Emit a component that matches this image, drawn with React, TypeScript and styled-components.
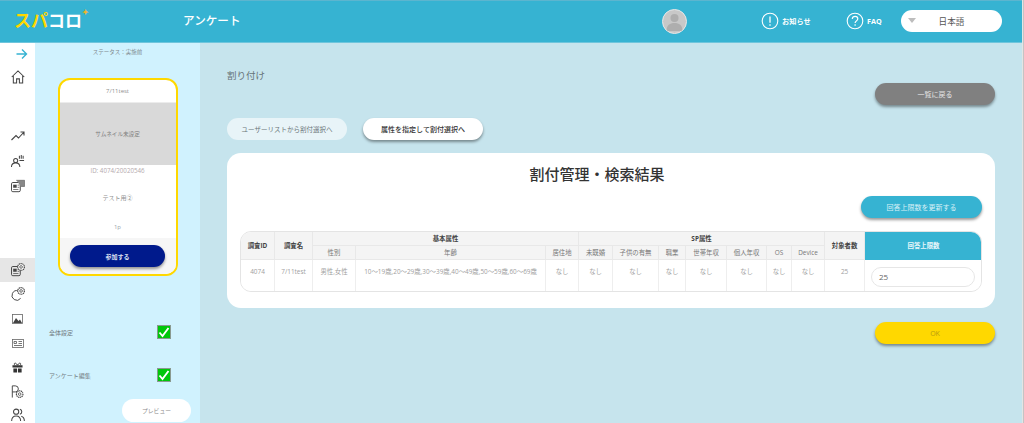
import styled, { createGlobalStyle } from "styled-components";

const GlobalStyle = createGlobalStyle`
  html, body {
    margin: 0;
    padding: 0;
    height: 423px;
    overflow: hidden;
    font-family: "Open Sans", "Noto Sans CJK JP", sans-serif;
    background: #c6e4ed;
  }
  * { box-sizing: border-box; }
`;

const Window = styled.div`
  width: 1024px;
  height: 423px;
  display: flex;
  overflow: hidden;
`;

const ScrollEdge = styled.div`
  width: 2px;
  flex: none;
  background: linear-gradient(to right, #e4e4e4 50%, #c4c4c4 50%);
`;

const Page = styled.div`
  width: 1022px;
  flex: none;
  display: flex;
  flex-direction: column;
`;

const Header = styled.header`
  height: 43px;
  flex: none;
  display: flex;
  align-items: center;
  background: #36b3d2;
  border-top: 1px solid #5cb5cf;
  border-bottom: 1px solid #6fc5dc;
  color: #fff;
  padding-left: 14px;
`;

const Logo = styled.div`
  width: 169px;
  font-size: 17px;
  font-weight: 700;
  line-height: 1;
  display: flex;
  margin-top: -2px;
  span:first-child { color: #ffd800; }
  sup {
    color: #f0b429;
    font-size: 8px;
    line-height: 1;
    margin-top: -4px;
  }
`;

const PageName = styled.div`
  font-size: 11.6px;
  font-weight: 500;
  width: 479px;
  margin-top: -3px;
`;

const Avatar = styled.div`
  width: 25px;
  height: 25px;
  flex: none;
  border-radius: 50%;
  border: 1px solid #e8e8e8;
  background: #c8c8c8;
  overflow: hidden;
  margin-right: 74px;
  margin-top: -1px;
  svg { display: block; }
`;

const HeaderLink = styled.div<{ $width: number }>`
  display: flex;
  align-items: center;
  gap: 3px;
  font-size: 7.2px;
  font-weight: 700;
  width: ${(p) => p.$width}px;
  margin-top: -1px;
`;

const LangSelect = styled.div`
  width: 101px;
  height: 22px;
  flex: none;
  margin-top: -1px;
  background: #fff;
  border-radius: 11px;
  color: #555;
  font-size: 8.6px;
  display: flex;
  align-items: center;
  justify-content: center;
  position: relative;
  &::before {
    content: "";
    position: absolute;
    left: 7px;
    top: 8px;
    border-left: 4px solid transparent;
    border-right: 4px solid transparent;
    border-top: 5px solid #bdbdbd;
  }
`;

const Body = styled.div`
  flex: 1;
  display: flex;
  min-height: 0;
`;

const IconRail = styled.nav`
  width: 35px;
  flex: none;
  background: #fff;
  display: flex;
  flex-direction: column;
  align-items: center;
`;

const RailItem = styled.div<{ $h: number; $active?: boolean; $gap?: number }>`
  width: 100%;
  height: ${(p) => p.$h}px;
  flex: none;
  margin-top: ${(p) => p.$gap ?? 0}px;
  display: flex;
  align-items: center;
  justify-content: center;
  background: ${(p) => (p.$active ? "#e6e6e6" : "transparent")};
`;

const StatusPanel = styled.aside`
  width: 165px;
  flex: none;
  background: #d0f2fe;
  display: flex;
  flex-direction: column;
  align-items: center;
  position: relative;
`;

const StatusText = styled.div`
  font-size: 5.5px;
  color: #808a8e;
  height: 35px;
  padding-top: 5px;
  line-height: 9px;
`;

const Card = styled.div`
  width: 120px;
  height: 198px;
  border: 2px solid #ffd800;
  border-radius: 12px;
  background: #fff;
  overflow: hidden;
  display: flex;
  flex-direction: column;
`;

const CardRow = styled.div<{ $h: number; $color?: string; $size?: number }>`
  height: ${(p) => p.$h}px;
  flex: none;
  display: flex;
  align-items: center;
  justify-content: center;
  font-size: ${(p) => p.$size ?? 6}px;
  color: ${(p) => p.$color ?? "#8f8f8f"};
`;

const Thumb = styled(CardRow)`
  background: #d9d9d9;
  border-top: 1px solid #ececec;
  color: #808080;
`;

const CardFooter = styled.div`
  flex: 1;
  margin-top: 4px;
  background: #f6f6f6;
  display: flex;
  justify-content: center;
  align-items: flex-start;
  padding-top: 7px;
`;

const JoinButton = styled.div`
  width: 95px;
  height: 22px;
  border-radius: 11px;
  background: #001a8c;
  color: #dfe3f3;
  font-size: 6px;
  font-weight: 700;
  display: flex;
  align-items: center;
  justify-content: center;
  box-shadow: 0 2px 3px rgba(0, 0, 0, 0.4);
`;

const CheckRow = styled.div<{ $top: number }>`
  width: 100%;
  margin-top: ${(p) => p.$top}px;
  padding-left: 14px;
  padding-right: 29px;
  height: 14px;
  display: flex;
  align-items: center;
  justify-content: space-between;
  font-size: 6px;
  color: #707a80;
`;

const CheckBox = styled.div`
  width: 14px;
  height: 14px;
  background: #00c70a;
  border: 1px solid #8a9a90;
  display: flex;
  align-items: center;
  justify-content: center;
`;

const PreviewButton = styled.div`
  position: absolute;
  left: 87px;
  top: 356px;
  width: 69px;
  height: 23px;
  border-radius: 12px;
  background: #fff;
  color: #8c8c8c;
  font-size: 5.8px;
  display: flex;
  align-items: center;
  justify-content: center;
`;

const Main = styled.main`
  flex: 1;
  background: #c6e4ed;
  padding: 0 27px;
  display: flex;
  flex-direction: column;
`;

const TitleRow = styled.div`
  height: 75px;
  padding-top: 26px;
  display: flex;
  justify-content: space-between;
  align-items: flex-start;
`;

const PageTitle = styled.h1`
  margin: 0;
  font-size: 9.5px;
  font-weight: 400;
  line-height: 14px;
  color: #667378;
`;

const Pill = styled.div<{ $bg: string; $color: string; $flat?: boolean; $w?: number; $bold?: boolean; $size?: number }>`
  width: ${(p) => p.$w ?? 120}px;
  height: 22px;
  flex: none;
  border-radius: 11px;
  background: ${(p) => p.$bg};
  color: ${(p) => p.$color};
  font-size: ${(p) => p.$size ?? 7}px;
  font-weight: ${(p) => (p.$bold ? 500 : 400)};
  display: flex;
  align-items: center;
  justify-content: center;
  box-shadow: ${(p) => (p.$flat ? "none" : "0 2px 3px rgba(0, 0, 0, 0.4)")};
`;

const BackButton = styled(Pill)`
  margin-top: 14px;
`;

const Tabs = styled.div`
  display: flex;
  gap: 16px;
  height: 35px;
`;

const ResultCard = styled.section`
  width: 768px;
  height: 155px;
  background: #fff;
  border-radius: 14px;
  padding: 0 13px;
  display: flex;
  flex-direction: column;
`;

const ResultTitle = styled.h2`
  margin: 0;
  height: 43px;
  line-height: 43px;
  padding-right: 28px;
  text-align: center;
  font-size: 15px;
  font-weight: 500;
  color: #333;
`;

const UpdateRow = styled.div`
  display: flex;
  justify-content: flex-end;
  height: 35px;
`;

const TableWrap = styled.div`
  width: 742px;
  height: 61px;
  border: 1px solid #e4e4e4;
  border-radius: 11px;
  overflow: hidden;
`;

const Table = styled.table`
  width: 742px;
  margin: -1px 0 0 -1px;
  border-collapse: collapse;
  table-layout: fixed;
  font-size: 6.4px;
`;

const Th = styled.th<{ $bold?: boolean; $accent?: boolean }>`
  padding: 0;
  height: 14px;
  background: ${(p) => (p.$accent ? "#36b3d2" : "#f4f4f4")};
  border: 1px solid #e8e8e8;
  border-color: ${(p) => (p.$accent ? "#36b3d2" : "#e8e8e8")};
  color: ${(p) => (p.$accent ? "#e8f7fb" : p.$bold ? "#444" : "#777")};
  font-weight: ${(p) => (p.$bold ? 700 : 400)};
  white-space: nowrap;
`;

const Td = styled.td`
  padding: 8px 0 0;
  height: 34px;
  vertical-align: top;
  text-align: center;
  color: #a0a0a0;
  background: #fff;
  border: 1px solid #eeeeee;
  white-space: nowrap;
  line-height: 8px;
`;

const LimitCell = styled(Td)`
  padding: 7px 7px 0 6px;
`;

const LimitInput = styled.div`
  width: 104px;
  height: 20px;
  border: 1px solid #e6e6e6;
  border-radius: 10px;
  background: #fff;
  color: #666;
  font-size: 8px;
  line-height: 18px;
  text-align: left;
  padding-left: 7px;
`;

const OkRow = styled.div`
  width: 768px;
  display: flex;
  justify-content: flex-end;
  margin-top: 14px;
`;

const ic = { fill: "none", stroke: "#444", strokeWidth: 1.1 } as const;

function CogBadge({ x, y }: { x: number; y: number }) {
  return (
    <g>
      <circle cx={x} cy={y} r={3.8} fill="#fff" stroke="#444" strokeWidth={1.3} strokeDasharray="1.5 .6" />
      <circle cx={x} cy={y} r={1.5} fill="none" stroke="#444" strokeWidth={0.9} />
    </g>
  );
}

function DocIcon({ cog }: { cog?: boolean }) {
  return (
    <svg width="14" height="14" viewBox="0 0 16 16">
      <rect x="0.6" y="4" width="10" height="10.5" rx="1.5" {...ic} />
      <rect x="2.5" y="6.5" width="4" height="3.5" fill="#444" />
      <path d="M2.5 12h6M7.5 7h2M7.5 9.500h2" {...ic} strokeWidth={0.8} />
      {cog ? <CogBadge x={11.5} y={4.5} /> : <path d="M6 1.500h9.500v7h-4" fill="#888" stroke="#666" strokeWidth={0.8} />}
    </svg>
  );
}

function CheckMark() {
  return (
    <svg width="12" height="12" viewBox="0 0 12 12">
      <path d="M1.5 6.5 4.5 10 10.5 2" fill="none" stroke="#fff" strokeWidth="1.9" />
    </svg>
  );
}

const ageText = "10〜19歳,20〜29歳,30〜39歳,40〜49歳,50〜59歳,60〜69歳";
const colWidths = [34, 38, 43, 190, 33, 34, 46, 27, 41, 40, 25, 33, 40, 118];
const spHeads = ["未既婚", "子供の有無", "職業", "世帯年収", "個人年収", "OS", "Device"];

export default function App() {
  return (
    <Window>
      <GlobalStyle />
      <Page>
        <Header>
          <Logo>
            <span>スパ</span>
            <span>コロ</span>
            <sup>✦</sup>
          </Logo>
          <PageName>アンケート</PageName>
          <Avatar>
            <svg width="23" height="23" viewBox="0 0 23 23">
              <circle cx="11.5" cy="8" r="4" fill="#aeaeae" />
              <path d="M3.5 21c0-6 3.5-8 8-8s8 2 8 8z" fill="#aeaeae" />
            </svg>
          </Avatar>
          <HeaderLink $width={85}>
            <svg width="18" height="18" viewBox="0 0 18 18">
              <circle cx="9" cy="9" r="7.8" fill="none" stroke="#fff" strokeWidth="1.1" />
              <path d="M9 4.5v6.2M9 12.2v1.6" stroke="#fff" strokeWidth="1.3" />
            </svg>
            お知らせ
          </HeaderLink>
          <HeaderLink $width={55}>
            <svg width="18" height="18" viewBox="0 0 18 18">
              <circle cx="9" cy="9" r="7.8" fill="none" stroke="#fff" strokeWidth="1.1" />
              <path
                d="M6.3 7c0-1.7 1.2-2.7 2.8-2.7S11.8 5.300 11.800 6.800c0 2-2.700 2.200-2.700 4.300M9.100 12.300v1.500"
                fill="none"
                stroke="#fff"
                strokeWidth="1.2"
              />
            </svg>
            FAQ
          </HeaderLink>
          <LangSelect>日本語</LangSelect>
        </Header>
        <Body>
          <IconRail>
            <RailItem $h={22}>
              <svg width="12" height="12" viewBox="0 0 12 12" style={{ marginLeft: 8 }}>
                <path d="M0.500 6h10M6 1.500 10.500 6 6 10.500" fill="none" stroke="#36b3d2" strokeWidth="1.400" />
              </svg>
            </RailItem>
            <RailItem $h={24}>
              <svg width="14" height="14" viewBox="0 0 15 15">
                <path d="M0.800 7.500 7.500 1l6.700 6.500M2.500 6.500v7.500h3.500v-4.500h3v4.500h3.500v-7.500" {...ic} />
              </svg>
            </RailItem>
            <RailItem $h={20} $gap={37}>
              <svg width="14" height="14" viewBox="0 0 14 14">
                <path d="M0.500 11 5 6.500l2.500 2.500 5.500-6M9.500 3h3.500v3.500" {...ic} />
              </svg>
            </RailItem>
            <RailItem $h={22} $gap={4}>
              <svg width="14" height="14" viewBox="0 0 15 15">
                <circle cx="5" cy="7" r="2.200" {...ic} />
                <path d="M0.500 14c0-3 2-4.500 4.500-4.500S9.500 11 9.500 14M9 2v3M11 1v4M13 2v3M9 7h5" {...ic} />
              </svg>
            </RailItem>
            <RailItem $h={22} $gap={3}>
              <DocIcon />
            </RailItem>
            <RailItem $h={24} $gap={61} $active>
              <DocIcon cog />
            </RailItem>
            <RailItem $h={24}>
              <svg width="14" height="14" viewBox="0 0 16 16">
                <path d="M8.500 4.500A5.500 5.500 0 1 0 11 13" {...ic} />
                <CogBadge x={11.500} y={4.500} />
              </svg>
            </RailItem>
            <RailItem $h={25}>
              <svg width="11" height="10" viewBox="0 0 11 10">
                <rect x="0.500" y="0.500" width="10" height="9" fill="#fff" stroke="#666" strokeWidth="0.800" />
                <path d="M1 9 4 4l2.500 3L8 5.500 10 9z" fill="#444" />
              </svg>
            </RailItem>
            <RailItem $h={24}>
              <svg width="12" height="9" viewBox="0 0 12 9">
                <rect x="0.500" y="0.500" width="11" height="8" fill="#fff" stroke="#666" strokeWidth="0.800" />
                <path d="M2 2.500h2.500v2H2zM6.500 2.500h3.500M6.500 4.500h3.500M2 6.500h8" stroke="#555" strokeWidth="0.800" fill="none" />
              </svg>
            </RailItem>
            <RailItem $h={24}>
              <svg width="11" height="11" viewBox="0 0 12 12">
                <path d="M0.500 3.500h11v2.500H0.500zM1.500 7h4v4.500h-4zM6.500 7h4v4.500h-4z" fill="#333" />
                <path d="M6 3.500C4 0 1.500 1 3 3.500M6 3.500C8 0 10.500 1 9 3.500" fill="none" stroke="#333" />
              </svg>
            </RailItem>
            <RailItem $h={24}>
              <svg width="13" height="13" viewBox="0 0 15 15">
                <path d="M1.500 14.500V1h3.500a3.200 3.200 0 0 1 0 7H1.500" {...ic} />
                <CogBadge x={10} y={10.500} />
              </svg>
            </RailItem>
            <RailItem $h={24}>
              <svg width="14" height="14" viewBox="0 0 15 15">
                <circle cx="5.500" cy="4" r="2.800" {...ic} />
                <path d="M0.700 14c0-4 2-5.500 4.800-5.500s4.800 1.500 4.800 5.500M9.500 1.300a2.800 2.800 0 0 1 0 5.400M11 8.800c2 .5 3.300 2 3.300 5.200" {...ic} />
              </svg>
            </RailItem>
          </IconRail>
          <StatusPanel>
            <StatusText>ステータス：実施前</StatusText>
            <Card>
              <CardRow $h={22}>7/11test</CardRow>
              <Thumb $h={63} $size={5.6}>サムネイル未設定</Thumb>
              <CardRow $h={10} $color="#b4a9ad" $size={6.2}>ID: 4074/20020546</CardRow>
              <CardRow $h={44}>テスト用②</CardRow>
              <CardRow $h={15} $color="#9aa4aa">1p</CardRow>
              <CardFooter>
                <JoinButton>参加する</JoinButton>
              </CardFooter>
            </Card>
            <CheckRow $top={49}>
              全体設定
              <CheckBox>
                <CheckMark />
              </CheckBox>
            </CheckRow>
            <CheckRow $top={29}>
              アンケート編集
              <CheckBox>
                <CheckMark />
              </CheckBox>
            </CheckRow>
            <PreviewButton>プレビュー</PreviewButton>
          </StatusPanel>
          <Main>
            <TitleRow>
              <PageTitle>割り付け</PageTitle>
              <BackButton $bg="#808080" $color="#e6e6e6">一覧に戻る</BackButton>
            </TitleRow>
            <Tabs>
              <Pill $bg="#e8f4f8" $color="#6a7478" $flat $size={6.5}>ユーザーリストから割付選択へ</Pill>
              <Pill $bg="#fff" $color="#333" $bold>属性を指定して割付選択へ</Pill>
            </Tabs>
            <ResultCard>
              <ResultTitle>割付管理・検索結果</ResultTitle>
              <UpdateRow>
                <Pill $bg="#36b3d2" $color="#d9f1f7" $w={121}>回答上限数を更新する</Pill>
              </UpdateRow>
              <TableWrap>
                <Table>
                  <colgroup>
                    {colWidths.map((w, i) => (
                      <col key={i} width={w} />
                    ))}
                  </colgroup>
                  <thead>
                    <tr>
                      <Th $bold rowSpan={2}>調査ID</Th>
                      <Th $bold rowSpan={2}>調査名</Th>
                      <Th $bold colSpan={3}>基本属性</Th>
                      <Th $bold colSpan={7}>SP属性</Th>
                      <Th $bold rowSpan={2}>対象者数</Th>
                      <Th $bold $accent rowSpan={2}>回答上限数</Th>
                    </tr>
                    <tr>
                      <Th>性別</Th>
                      <Th>年齢</Th>
                      <Th>居住地</Th>
                      {spHeads.map((h) => (
                        <Th key={h}>{h}</Th>
                      ))}
                    </tr>
                  </thead>
                  <tbody>
                    <tr>
                      <Td>4074</Td>
                      <Td>7/11test</Td>
                      <Td>男性,女性</Td>
                      <Td>{ageText}</Td>
                      <Td>なし</Td>
                      {spHeads.map((h) => (
                        <Td key={h}>なし</Td>
                      ))}
                      <Td>25</Td>
                      <LimitCell>
                        <LimitInput>25</LimitInput>
                      </LimitCell>
                    </tr>
                  </tbody>
                </Table>
              </TableWrap>
            </ResultCard>
            <OkRow>
              <Pill $bg="#ffd800" $color="#b89c10">OK</Pill>
            </OkRow>
          </Main>
        </Body>
      </Page>
      <ScrollEdge />
    </Window>
  );
}
